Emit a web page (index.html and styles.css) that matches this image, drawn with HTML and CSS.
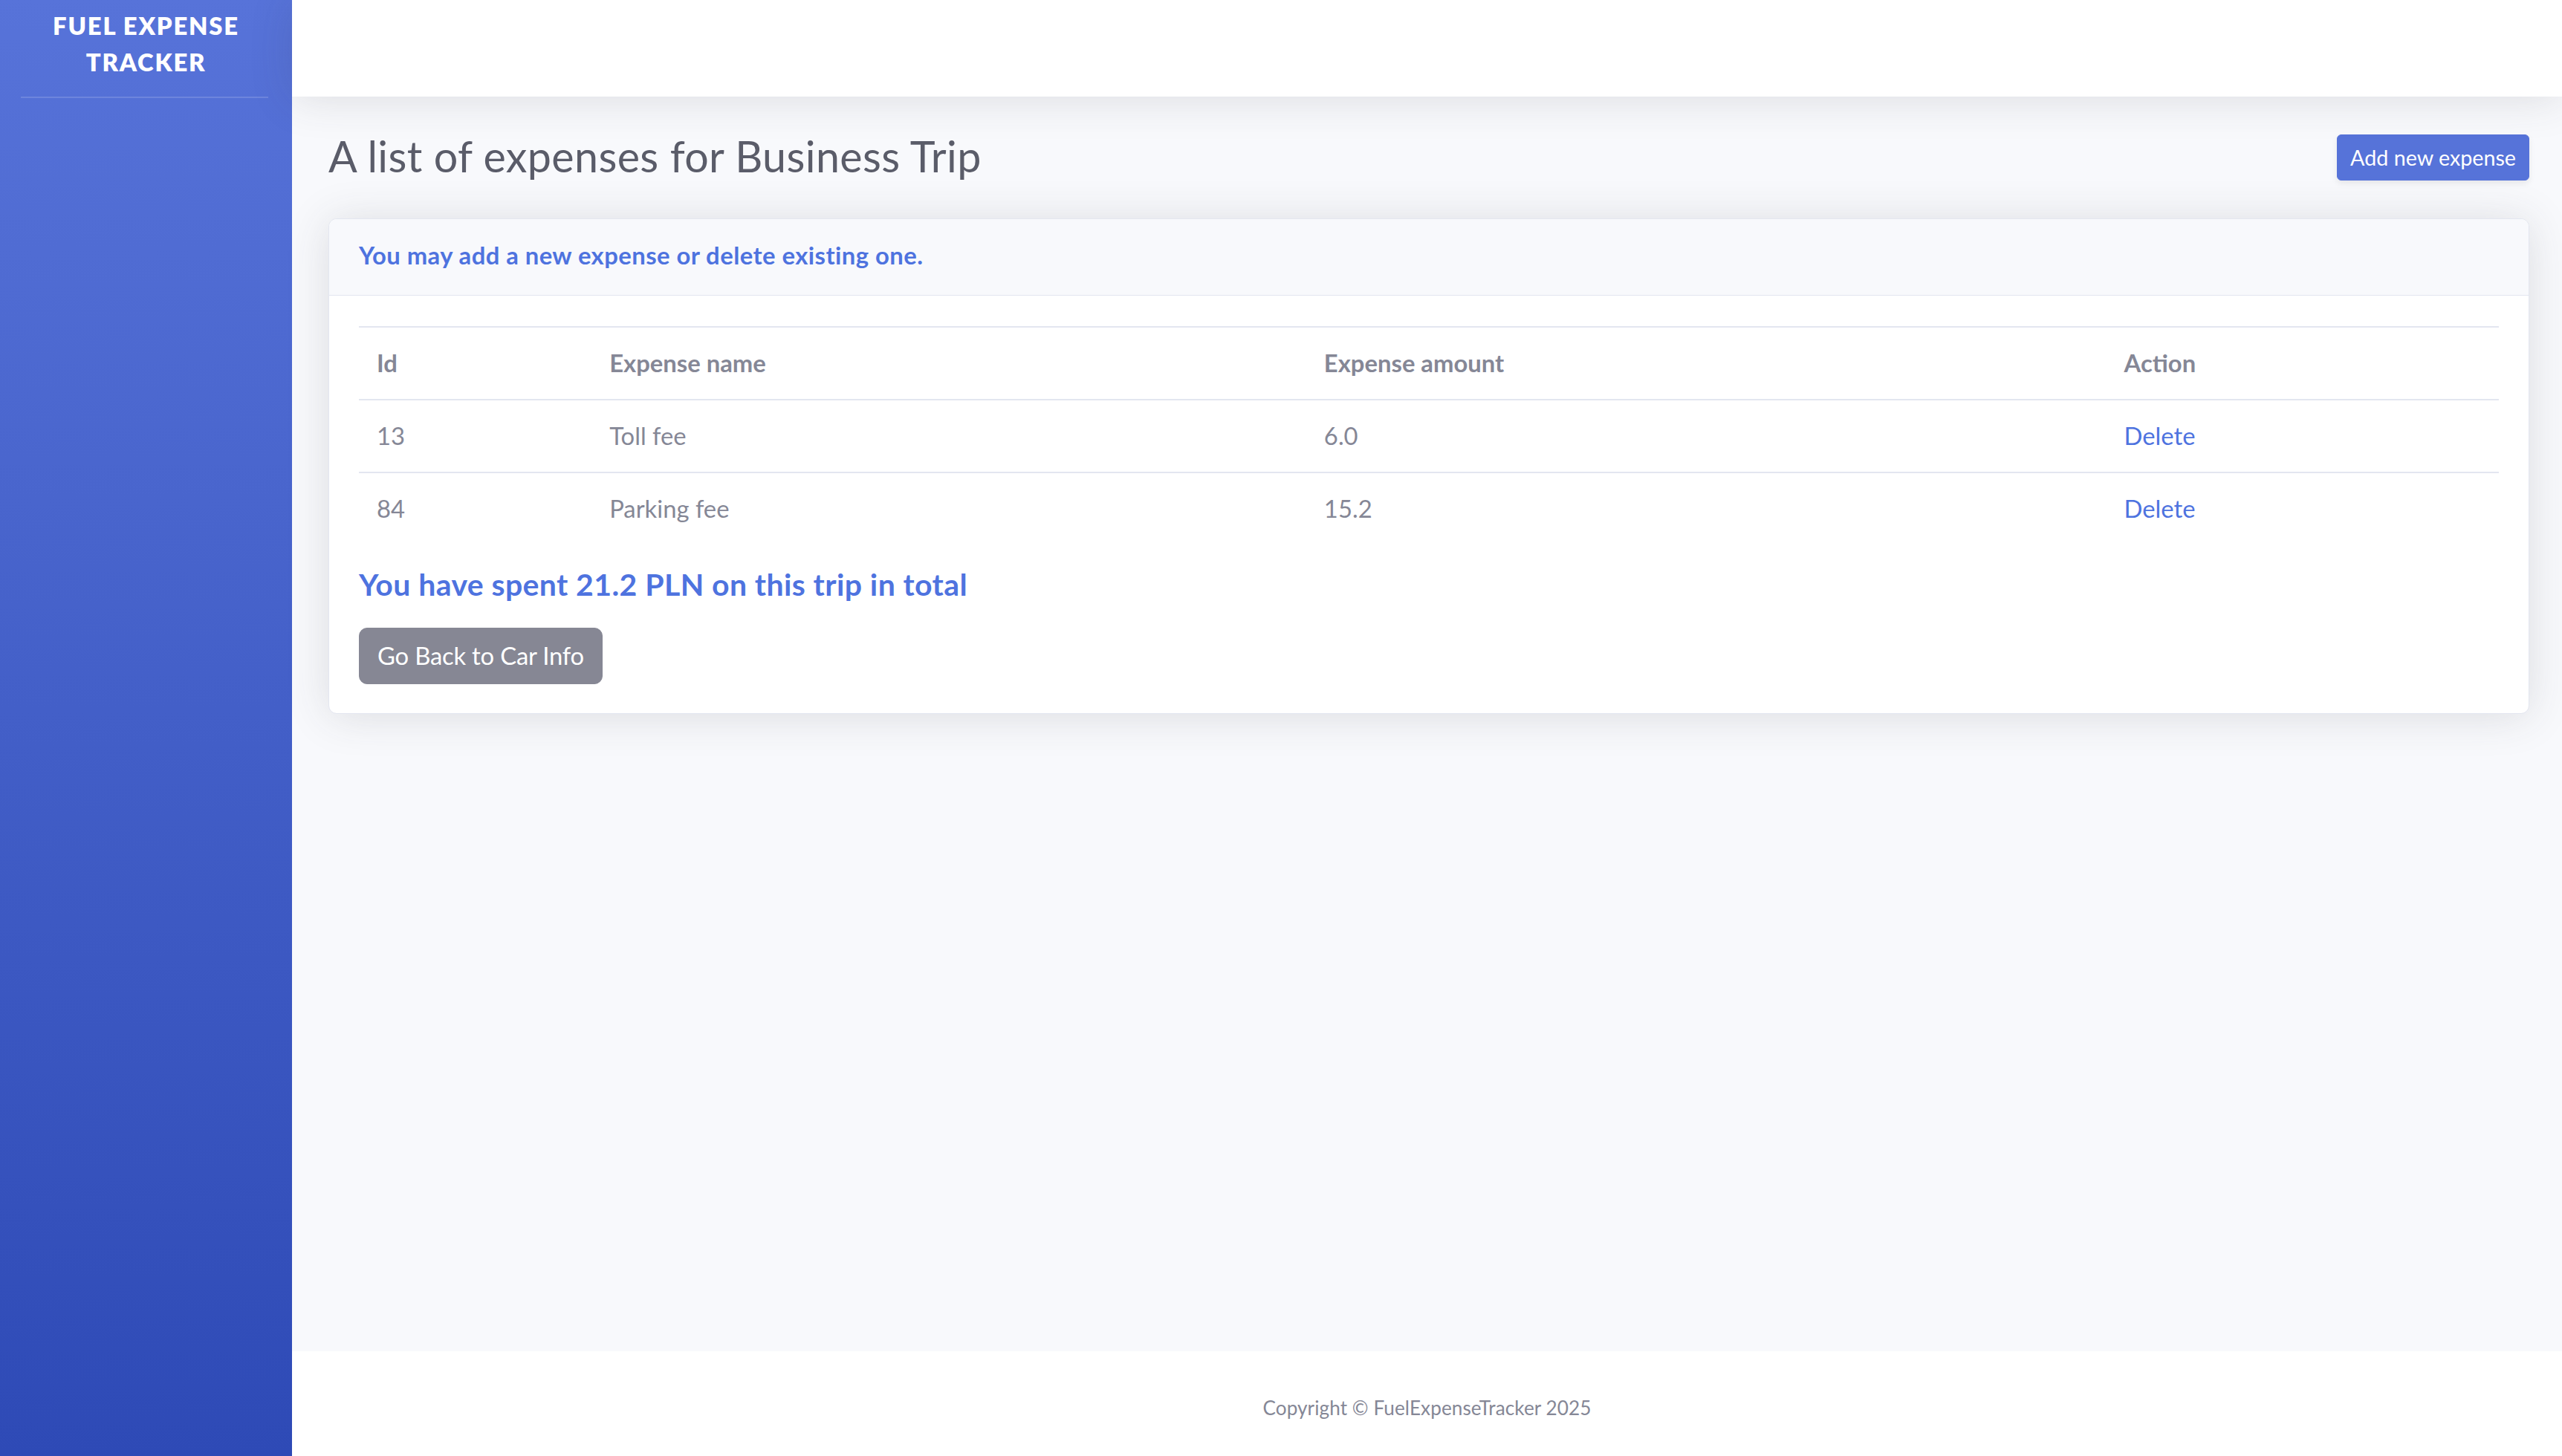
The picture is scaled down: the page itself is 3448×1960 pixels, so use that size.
FILE: index.html
```html
<!DOCTYPE html>
<html lang="en">
<head>
<meta charset="utf-8">
<title>Fuel Expense Tracker</title>
<link rel="stylesheet" href="styles.css">
</head>
<body>
<div class="wrapper">
  <aside class="sidebar">
    <div class="brand">Fuel Expense Tracker</div>
    <hr class="sidebar-divider">
  </aside>
  <div class="content-wrapper">
    <div class="content">
      <nav class="topbar"></nav>
      <div class="container">
        <div class="page-header">
          <h1 class="page-title">A list of expenses for Business Trip</h1>
          <a class="btn btn-sm btn-primary" href="#">Add new expense</a>
        </div>
        <div class="card">
          <div class="card-header">
            <h6 class="card-title">You may add a new expense or delete existing one.</h6>
          </div>
          <div class="card-body">
            <table class="table">
              <colgroup>
                <col class="col-id">
                <col class="col-name">
                <col class="col-amount">
                <col class="col-action">
              </colgroup>
              <thead>
                <tr><th>Id</th><th>Expense name</th><th>Expense amount</th><th>Action</th></tr>
              </thead>
              <tbody>
                <tr><td>13</td><td>Toll fee</td><td>6.0</td><td><a class="link" href="#">Delete</a></td></tr>
                <tr><td>84</td><td>Parking fee</td><td>15.2</td><td><a class="link" href="#">Delete</a></td></tr>
              </tbody>
            </table>
            <h5 class="total">You have spent 21.2 PLN on this trip in total</h5>
            <a class="btn btn-secondary" href="#">Go Back to Car Info</a>
          </div>
        </div>
      </div>
    </div>
    <footer class="footer">
      <span class="copyright">Copyright © FuelExpenseTracker 2025</span>
    </footer>
  </div>
</div>
</body>
</html>
```
FILE: styles.css
```css
* { box-sizing: border-box; }
html, body { margin: 0; padding: 0; }
body {
  font-family: Lato, "Open Sans", sans-serif;
  font-size: 32.8px;
  line-height: 1.5;
  color: #858796;
  background: #f8f9fc;
}
.wrapper {
  display: flex;
  min-height: 100vh;
}
.sidebar {
  width: 393px;
  flex-shrink: 0;
  background: linear-gradient(180deg, #5773d9 0%, #2e4ab6 100%);
}
.brand {
  padding: 10px 30px 0;
  text-align: center;
  color: #fff;
  font-weight: 800;
  text-transform: uppercase;
  letter-spacing: 1.8px;
  font-size: 32.8px;
  line-height: 49.2px;
}
.sidebar-divider {
  margin: 22px 32px 0 28px;
  border: 0;
  border-top: 2px solid rgba(255,255,255,0.15);
  height: 0;
}
.content-wrapper {
  flex: 1;
  display: flex;
  flex-direction: column;
  background: #f8f9fc;
  min-width: 0;
}
.content { flex: 1; }
.topbar {
  height: 130px;
  background: #fff;
  box-shadow: 0 3px 57px 0 rgba(58,59,69,0.15);
  margin-bottom: 47px;
  position: relative;
  z-index: 1;
}
.container {
  padding: 0 44px 0 49px;
}
.page-header {
  display: flex;
  align-items: center;
  justify-content: space-between;
  margin-bottom: 48px;
}
.page-title {
  margin: 0;
  padding: 2px 0 5px;
  font-size: 57.4px;
  line-height: 62px;
  font-weight: 400;
  color: #5a5c69;
  letter-spacing: 0.38px;
}
.btn {
  display: inline-block;
  text-decoration: none;
  color: #fff;
  border: 1px solid transparent;
  white-space: nowrap;
}
.btn-sm {
  font-size: 28.7px;
  line-height: 60px;
  padding: 0 17px;
  border-radius: 6px;
}
.btn-primary {
  background: #5673d9;
  border-color: #5673d9;
  box-shadow: 0 4px 8px rgba(0,0,0,0.075);
}
.btn-secondary {
  background: #868794;
  border-color: #868794;
  font-size: 32.8px;
  line-height: 74px;
  padding: 0 24px;
  border-radius: 11px;
  letter-spacing: -0.2px;
}
.card {
  background: #fff;
  border: 1px solid #e3e6f0;
  border-radius: 11px;
  box-shadow: 0 3px 57px 0 rgba(58,59,69,0.15);
  overflow: hidden;
}
.card-header {
  background: #f8f9fc;
  border-bottom: 1px solid #e3e6f0;
  padding: 23px 40px 27px;
}
.card-title {
  margin: 0;
  font-size: 32.8px;
  line-height: 52px;
  font-weight: 700;
  color: #4e73df;
  letter-spacing: 0.45px;
}
.card-body {
  padding: 41px 40px 39px;
}
.table {
  width: 100%;
  border-collapse: collapse;
  table-layout: fixed;
  margin-bottom: 29px;
  color: #858796;
}
.col-id { width: 313px; }
.col-name { width: 961px; }
.col-amount { width: 1076px; }
.col-action { width: 528px; }
.table th, .table td {
  text-align: left;
  padding: 24px 24px 24px;
  line-height: 48px;
  border-top: 2px solid #e3e6f0;
  vertical-align: top;
}
.table th { font-weight: 700; }
.link { color: #4e73df; text-decoration: none; }
.total {
  margin: 0 0 34px;
  font-size: 41px;
  line-height: 49.2px;
  font-weight: 700;
  color: #4e73df;
  letter-spacing: 0.4px;
}
.footer {
  background: #fff;
  padding: 63px 0 52px;
  text-align: center;
}
.copyright {
  display: block;
  font-size: 26.2px;
  line-height: 26px;
  color: #858796;
  letter-spacing: 0.05px;
}
```
